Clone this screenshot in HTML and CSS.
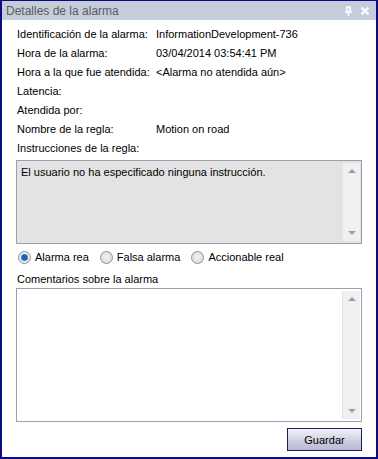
FILE: index.html
```html
<!DOCTYPE html>
<html lang="es">
<head>
    <meta charset="UTF-8">
    <title>Detalles de la alarma</title>
    <link rel="stylesheet" href="styles.css">
</head>
<body>
    <div class="panel">
        <div class="titlebar">
            <span class="title">Detalles de la alarma</span>
            <span class="tools">
                <svg width="9" height="10" viewBox="0 0 9 10"><path d="M2 1h5M3 1v5M6 1v5M1 6h7M4.5 6v4" stroke="#fff" stroke-width="1.6" fill="none"/></svg>
                <svg width="10" height="10" viewBox="0 0 10 10"><path d="M1.5 1.5l7 7M8.5 1.5l-7 7" stroke="#fff" stroke-width="2.4"/></svg>
            </span>
        </div>

        <div class="content">
            <div class="info">
                <div class="row"><span class="label">Identificación de la alarma:</span><span>InformationDevelopment-736</span></div>
                <div class="row"><span class="label">Hora de la alarma:</span><span>03/04/2014 03:54:41 PM</span></div>
                <div class="row"><span class="label">Hora a la que fue atendida:</span><span>&lt;Alarma no atendida aún&gt;</span></div>
                <div class="row"><span class="label">Latencia:</span></div>
                <div class="row"><span class="label">Atendida por:</span></div>
                <div class="row"><span class="label">Nombre de la regla:</span><span>Motion on road</span></div>
                <div class="row"><span class="label">Instrucciones de la regla:</span></div>
            </div>

            <div class="box readonly instructions">
                <div class="box-text">El usuario no ha especificado ninguna instrucción.</div>
                <div class="scroll"><span class="arrow up"></span><span class="arrow down"></span></div>
            </div>

            <div class="radios">
                <label class="radio"><span class="dot checked"></span>Alarma rea</label>
                <label class="radio"><span class="dot"></span>Falsa alarma</label>
                <label class="radio"><span class="dot"></span>Accionable real</label>
            </div>

            <div class="caption">Comentarios sobre la alarma</div>
            <div class="box comments">
                <div class="box-text"></div>
                <div class="scroll"><span class="arrow up"></span><span class="arrow down"></span></div>
            </div>

            <div class="actions">
                <button class="btn">Guardar</button>
            </div>
        </div>
    </div>
</body>
</html>
```

FILE: styles.css
```css
body {
    margin: 0;
    font-family: "Liberation Sans", Arial, sans-serif;
    font-size: 11px;
    color: #000;
    background: #fff;
}
.panel {
    width: 378px;
    height: 459px;
    box-sizing: border-box;
    border: 2px solid #0b0b84;
    border-top-width: 1px;
    display: flex;
    flex-direction: column;
}
.titlebar {
    height: 19px;
    background: #c5cddb;
    display: flex;
    align-items: center;
    justify-content: space-between;
    padding: 0 6px 0 4px;
}
.title {
    font-size: 12px;
    color: #5c5c5c;
}
.tools {
    display: flex;
    gap: 7px;
    align-items: center;
}
.content {
    flex: 1;
    padding: 4px 14px 6px 14px;
    display: flex;
    flex-direction: column;
}
.info {
    padding-left: 1px;
}
.row {
    display: flex;
    height: 19px;
    align-items: center;
    white-space: nowrap;
}
.label {
    width: 139px;
    flex-shrink: 0;
}
.box {
    border: 1px solid #9c9cb4;
    display: flex;
}
.instructions {
    height: 82px;
    margin-top: 3px;
    background: #e3e3e3;
}
.comments {
    height: 132px;
    background: #fff;
}
.box-text {
    flex: 1;
    padding: 5px 4px;
}
.scroll {
    width: 17px;
    margin: 2px 1px 2px 0;
    background: #f0f0f0;
    border-left: 1px solid #e4e4e4;
    display: flex;
    flex-direction: column;
    justify-content: space-between;
    align-items: center;
    padding: 6px 0;
}
.arrow {
    width: 0;
    height: 0;
    border-left: 4px solid transparent;
    border-right: 4px solid transparent;
}
.arrow.up {
    border-bottom: 4px solid #a0a0a0;
}
.arrow.down {
    border-top: 4px solid #a0a0a0;
}
.radios {
    display: flex;
    height: 26px;
    align-items: center;
    padding-left: 2px;
}
.radio {
    display: flex;
    align-items: center;
    margin-right: 11px;
}
.dot {
    width: 11px;
    height: 11px;
    border-radius: 50%;
    border: 1px solid #8f8f8f;
    background: radial-gradient(circle, #f4f4f4 0%, #d6d6d6 100%);
    margin-right: 4px;
}
.dot.checked {
    background: radial-gradient(circle, #1e5fb0 0 2.5px, #7aa9dd 3.5px, #e8eef6 4px, #e0e0e0 100%);
}
.caption {
    padding-left: 1px;
    height: 18px;
    display: flex;
    align-items: center;
}
.actions {
    display: flex;
    justify-content: flex-end;
    margin-top: 6px;
}
.btn {
    width: 75px;
    height: 23px;
    font-family: inherit;
    font-size: 11px;
    border: 1px solid #1c1c6c;
    background: linear-gradient(#f4f4fa, #cccce0 60%, #b8b8d2);
    color: #000;
    padding: 0;
}
```
